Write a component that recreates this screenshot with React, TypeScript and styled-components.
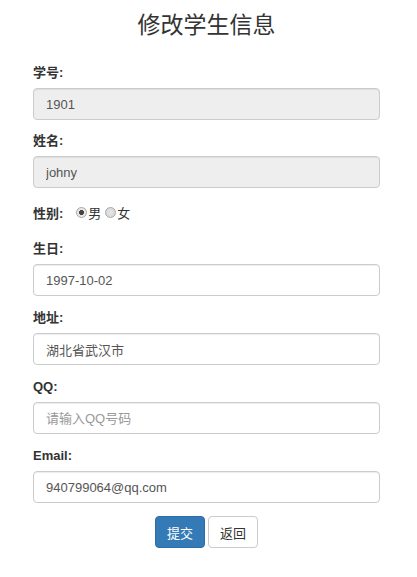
import React from "react";
import styled, { createGlobalStyle } from "styled-components";

const GlobalStyle = createGlobalStyle`
  body {
    margin: 0;
    background: #fff;
    font-family: "Liberation Sans", Arial, "Noto Sans CJK SC", sans-serif;
    color: #333;
  }
`;

const Page = styled.div`
  padding: 9px 37px 20px 33px;
`;

const Title = styled.h3`
  margin: 0 0 23px;
  text-align: center;
  font-size: 23px;
  font-weight: 400;
  line-height: 32px;
  color: #333;
`;

const Group = styled.div<{ $gap: number }>`
  margin-bottom: ${(p) => p.$gap}px;
`;

const Label = styled.label`
  display: block;
  margin-bottom: 6px;
  font-size: 13px;
  font-weight: 700;
  line-height: 18px;
  color: #333;
`;

const Input = styled.input<{ $readOnly?: boolean }>`
  display: block;
  box-sizing: border-box;
  width: 100%;
  height: 32px;
  padding: 6px 12px;
  font-family: inherit;
  font-size: 13px;
  color: #555;
  background: ${(p) => (p.$readOnly ? "#eee" : "#fff")};
  border: 1px solid #ccc;
  border-radius: 4px;
  box-shadow: inset 0 1px 1px rgba(0, 0, 0, 0.075);
  outline: none;
  &::placeholder {
    color: #999;
  }
`;

const RadioRow = styled.div`
  display: flex;
  align-items: center;
  height: 22px;
  margin-bottom: 17px;
`;

const RowLabel = styled.span`
  font-size: 13px;
  font-weight: 700;
  color: #333;
  margin-right: 13px;
`;

const Choice = styled.label`
  display: inline-flex;
  align-items: center;
  font-size: 13px;
  color: #333;
  margin-right: 4px;
`;

const Radio = styled.input`
  appearance: none;
  width: 11px;
  height: 11px;
  margin: 0 1px 0 0;
  border: 1px solid #a7a7a7;
  border-radius: 50%;
  background: radial-gradient(circle, #e6e6e6 0%, #d4d4d4 100%);
  box-sizing: border-box;
  &:checked {
    background: radial-gradient(circle, #444 0 2.2px, #e8e8e8 2.8px);
  }
`;

const Actions = styled.div`
  display: flex;
  justify-content: center;
  gap: 3px;
`;

const Button = styled.button<{ $primary?: boolean }>`
  height: 32px;
  padding: 0 11px;
  font-family: inherit;
  font-size: 13px;
  border-radius: 4px;
  border: 1px solid ${(p) => (p.$primary ? "#2e6da4" : "#ccc")};
  background: ${(p) => (p.$primary ? "#337ab7" : "#fff")};
  color: ${(p) => (p.$primary ? "#fff" : "#333")};
  cursor: pointer;
`;

const Field = ({
  label,
  value,
  placeholder,
  readOnly,
  gap = 13,
}: {
  label: string;
  value?: string;
  placeholder?: string;
  readOnly?: boolean;
  gap?: number;
}) => (
  <Group $gap={gap}>
    <Label>{label}</Label>
    <Input
      $readOnly={readOnly}
      readOnly={readOnly}
      defaultValue={value}
      placeholder={placeholder}
    />
  </Group>
);

const App = () => {
  return (
    <Page>
      <GlobalStyle />
      <Title>修改学生信息</Title>
      <Field label="学号:" value="1901" readOnly gap={12} />
      <Field label="姓名:" value="johny" readOnly />
      <RadioRow>
        <RowLabel>性别:</RowLabel>
        <Choice>
          <Radio type="radio" name="sex" defaultChecked />男
        </Choice>
        <Choice>
          <Radio type="radio" name="sex" />女
        </Choice>
      </RadioRow>
      <Field label="生日:" value="1997-10-02" />
      <Field label="地址:" value="湖北省武汉市" />
      <Field label="QQ:" placeholder="请输入QQ号码" />
      <Field label="Email:" value="940799064@qq.com" />
      <Actions>
        <Button $primary>提交</Button>
        <Button>返回</Button>
      </Actions>
    </Page>
  );
};

export default App;
